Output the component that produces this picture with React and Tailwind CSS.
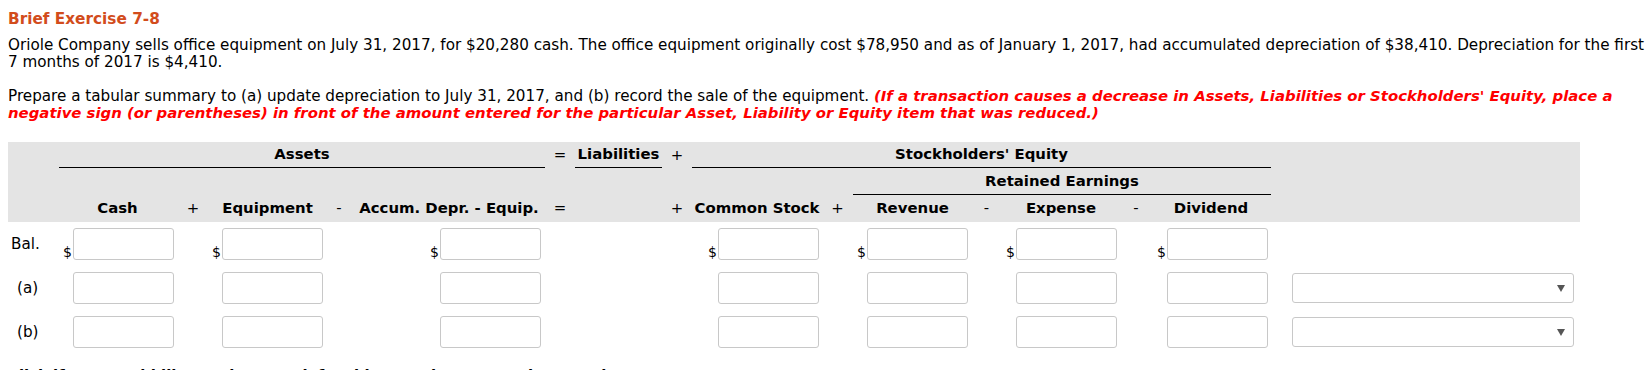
import React from 'react';

// one column template shared by the header band and the entry rows
const GRID =
  'grid grid-cols-[51px_117px_34px_115px_28px_192px_30px_87px_30px_130px_31px_119px_29px_120px_30px_120px_21px_282px_6px]';

const moneyCols = [
  { key: 'cash', start: 'col-start-2', pad: 'pr-[2px]' },
  { key: 'equip', start: 'col-start-4', pad: 'pr-[2px]' },
  { key: 'accum', start: 'col-start-6', pad: 'pr-[4px]' },
  { key: 'stock', start: 'col-start-10', pad: 'pr-[3px]' },
  { key: 'rev', start: 'col-start-12', pad: 'pr-[4px]' },
  { key: 'exp', start: 'col-start-14', pad: 'pr-[4px]' },
  { key: 'div', start: 'col-start-16', pad: 'pr-[3px]' },
];

const Box = () => (
  <input
    type="text"
    className="w-[101px] h-[32px] bg-white border border-[#c8c8c8] rounded-[3px] outline-none"
  />
);

const Dropdown = () => (
  <div className="col-start-18 h-[30px] self-center bg-white border border-[#c8c8c8] rounded-[3px] flex items-center justify-end pr-[8px]">
    <svg width="8" height="7" viewBox="0 0 8 7">
      <path d="M0 0 L8 0 L4 7 Z" fill="#555" />
    </svg>
  </div>
);

const EntryRow = ({ label, labelPad, dollars, select }) => (
  <div className={`${GRID} h-[32px]`}>
    <div className={`col-start-1 flex items-center ${labelPad}`}>{label}</div>
    {moneyCols.map((c) => (
      <div key={c.key} className={`${c.start} flex justify-end items-end ${c.pad}`}>
        {dollars && <span className="leading-[15px] mr-[1px] text-[14px]">$</span>}
        <Box />
      </div>
    ))}
    {select && <Dropdown />}
  </div>
);

const Cell = ({ className = '', children }) => (
  <div className={`flex items-center justify-center ${className}`}>{children}</div>
);

export default function App() {
  return (
    <div className="h-screen overflow-hidden bg-white text-black font-['DejaVu_Sans',Verdana,sans-serif] text-[15.2px] leading-[17px] pl-[8px] pt-[11px]">
      <h2 className="font-bold text-[15.3px] leading-[17px] text-[#d24c1c]">Brief Exercise 7-8</h2>

      <p className="mt-[9px] whitespace-nowrap">
        Oriole Company sells office equipment on July 31, 2017, for $20,280 cash. The office equipment
        originally cost $78,950 and as of January 1, 2017, had accumulated depreciation of $38,410.
        Depreciation for the first
        <br />7 months of 2017 is $4,410.
      </p>

      <p className="mt-[17px] whitespace-nowrap">
        Prepare a tabular summary to (a) update depreciation to July 31, 2017, and (b) record the sale of
        the equipment.{' '}
        <span className="text-[#ff0000] font-bold italic text-[14.9px]">
          (If a transaction causes a decrease in Assets, Liabilities or Stockholders' Equity, place a
          <br />
          negative sign (or parentheses) in front of the amount entered for the particular Asset,
          Liability or Equity item that was reduced.)
        </span>
      </p>

      {/* column headings */}
      <div className="mt-[20px] w-[1572px] bg-[#e4e4e4] font-bold text-[14.9px]">
        <div className={`${GRID} h-[26px]`}>
          <Cell className="col-start-2 col-span-5 border-b border-black">Assets</Cell>
          <Cell className="col-start-7 font-normal">=</Cell>
          <Cell className="col-start-8 border-b border-black">Liabilities</Cell>
          <Cell className="col-start-9 font-normal">+</Cell>
          <Cell className="col-start-10 col-span-7 border-b border-black">Stockholders' Equity</Cell>
        </div>
        <div className={`${GRID} h-[27px]`}>
          <Cell className="col-start-12 col-span-5 border-b border-black">Retained Earnings</Cell>
        </div>
        <div className={`${GRID} h-[27px]`}>
          <Cell className="col-start-2">Cash</Cell>
          <Cell className="col-start-3 font-normal">+</Cell>
          <Cell className="col-start-4">Equipment</Cell>
          <Cell className="col-start-5 font-normal">-</Cell>
          <Cell className="col-start-6">Accum. Depr. - Equip.</Cell>
          <Cell className="col-start-7 font-normal">=</Cell>
          <Cell className="col-start-9 font-normal">+</Cell>
          <Cell className="col-start-10">Common Stock</Cell>
          <Cell className="col-start-11 font-normal">+</Cell>
          <Cell className="col-start-12">Revenue</Cell>
          <Cell className="col-start-13 font-normal">-</Cell>
          <Cell className="col-start-14">Expense</Cell>
          <Cell className="col-start-15 font-normal">-</Cell>
          <Cell className="col-start-16">Dividend</Cell>
        </div>
      </div>

      {/* balance and transaction rows */}
      <div className="mt-[6px] flex flex-col gap-[12px]">
        <EntryRow label="Bal." labelPad="pl-[3px]" dollars />
        <EntryRow label="(a)" labelPad="pl-[9px]" select />
        <EntryRow label="(b)" labelPad="pl-[9px]" select />
      </div>

      <p className="mt-[19px] font-bold text-[14.9px] whitespace-nowrap">
        Click if you would like to Show Work for this question:{' '}
        <span className="underline">Open Show Work</span>
      </p>
    </div>
  );
}
